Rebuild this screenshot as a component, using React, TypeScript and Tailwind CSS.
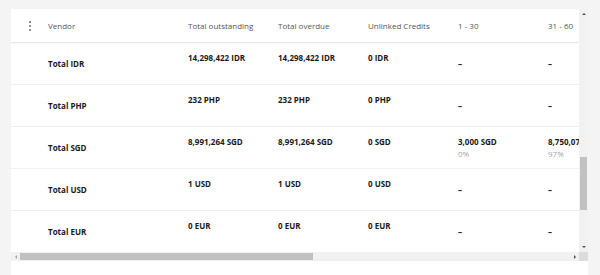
import React from "react";

interface Row {
  vendor: string;
  outstanding: string;
  overdue: string;
  credits: string;
  d30: string;
  d30pct?: string;
  d60: string;
  d60pct?: string;
}

const rows: Row[] = [
  { vendor: "Total IDR", outstanding: "14,298,422 IDR", overdue: "14,298,422 IDR", credits: "0 IDR", d30: "–", d60: "–" },
  { vendor: "Total PHP", outstanding: "232 PHP", overdue: "232 PHP", credits: "0 PHP", d30: "–", d60: "–" },
  { vendor: "Total SGD", outstanding: "8,991,264 SGD", overdue: "8,991,264 SGD", credits: "0 SGD", d30: "3,000 SGD", d30pct: "0%", d60: "8,750,077 SGD", d60pct: "97%" },
  { vendor: "Total USD", outstanding: "1 USD", overdue: "1 USD", credits: "0 USD", d30: "–", d60: "–" },
  { vendor: "Total EUR", outstanding: "0 EUR", overdue: "0 EUR", credits: "0 EUR", d30: "–", d60: "–" },
];

const grid = "grid grid-cols-[37px_140px_90px_90px_90px_90px_90px]";

const Amount = ({ value, pct }: { value: string; pct?: string }) => {
  if (value === "–") {
    return <div className="flex items-center font-bold text-[#1a1a1a]">–</div>;
  }
  return (
    <div className="flex flex-col justify-center whitespace-nowrap">
      <div className="font-bold text-[#1a1a1a]">{value}</div>
      <div className="h-[12px] text-[#a3a3a3]">{pct}</div>
    </div>
  );
};

const Kebab = () => (
  <div className="flex flex-col items-center gap-[2px]">
    <span className="h-[2px] w-[2px] rounded-full bg-[#6b6b6b]" />
    <span className="h-[2px] w-[2px] rounded-full bg-[#6b6b6b]" />
    <span className="h-[2px] w-[2px] rounded-full bg-[#6b6b6b]" />
  </div>
);

const App = () => {
  return (
    <div
      className="h-[275px] w-[600px] overflow-hidden bg-[#f4f4f4] pl-[11px] pr-[12px] pt-[9px] text-[8px] leading-[12px]"
      style={{ fontFamily: '"Open Sans", "Noto Sans", sans-serif' }}
    >
      <div className="flex h-full flex-col bg-white">
        <div className="flex h-[243px]">
          <div className="flex-1 overflow-hidden">
            <div className={`${grid} h-[34px] items-center border-b border-[#e6e6e6] text-[#555] shadow-[0_1px_2px_rgba(0,0,0,0.04)]`}>
              <div className="flex justify-center">
                <Kebab />
              </div>
              <div>Vendor</div>
              <div>Total outstanding</div>
              <div>Total overdue</div>
              <div>Unlinked Credits</div>
              <div>1 - 30</div>
              <div>31 - 60</div>
            </div>
            {rows.map((r) => (
              <div key={r.vendor} className={`${grid} h-[42px] border-b border-[#f0f0f0]`}>
                <div />
                <div className="flex items-center font-bold text-[#1a1a1a]">{r.vendor}</div>
                <Amount value={r.outstanding} />
                <Amount value={r.overdue} />
                <Amount value={r.credits} />
                <Amount value={r.d30} pct={r.d30pct} />
                <Amount value={r.d60} pct={r.d60pct} />
              </div>
            ))}
          </div>
          {/* vertical scrollbar */}
          <div className="flex w-[9px] flex-col bg-[#f1f1f1]">
            <div className="flex h-[10px] items-center justify-center">
              <span className="border-x-[2px] border-b-[2px] border-x-transparent border-b-[#505050]" />
            </div>
            <div className="flex-1 pt-[138px]">
              <div className="mx-auto h-[53px] w-[7px] bg-[#c1c1c1]" />
            </div>
            <div className="flex h-[10px] items-center justify-center">
              <span className="border-x-[2px] border-t-[2px] border-x-transparent border-t-[#505050]" />
            </div>
          </div>
        </div>
        {/* horizontal scrollbar */}
        <div className="flex h-[9px]">
          <div className="flex flex-1 bg-[#f1f1f1]">
            <div className="flex w-[9px] items-center justify-center">
              <span className="border-y-[2px] border-r-[2px] border-y-transparent border-r-[#a3a3a3]" />
            </div>
            <div className="flex flex-1 items-center">
              <div className="h-[7px] w-[293px] bg-[#c1c1c1]" />
            </div>
            <div className="flex w-[9px] items-center justify-center">
              <span className="border-y-[2px] border-l-[2px] border-y-transparent border-l-[#505050]" />
            </div>
          </div>
          <div className="w-[9px] bg-[#dcdcdc]" />
        </div>
      </div>
    </div>
  );
};

export default App;
